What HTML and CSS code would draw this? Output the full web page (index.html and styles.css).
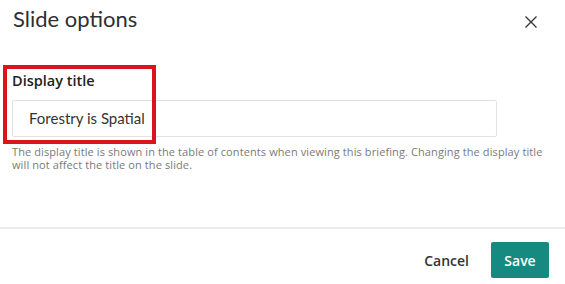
FILE: index.html
```html
<!DOCTYPE html>
<html>
<head>
<meta charset="utf-8">
<link rel="stylesheet" href="styles.css">
</head>
<body>
<div class="dialog">
  <div class="header">
    <h1 class="title">Slide options</h1>
    <button class="close" aria-label="Close">
      <svg width="12" height="12" viewBox="0 0 12 12"><path d="M0.5 0.5L11.5 11.5M11.5 0.5L0.5 11.5" stroke="#333" stroke-width="1.3" fill="none"/></svg>
    </button>
  </div>
  <div class="body">
    <div class="field">
      <label class="label">Display title</label>
      <div class="input">Forestry is Spatial</div>
      <div class="annotation"></div>
    </div>
    <p class="help">The display title is shown in the table of contents when viewing this briefing. Changing the display title will not affect the title on the slide.</p>
  </div>
  <div class="divider"></div>
  <div class="footer">
    <button class="cancel">Cancel</button>
    <button class="save">Save</button>
  </div>
</div>
</body>
</html>
```
FILE: styles.css
```css
html, body {
  margin: 0;
  padding: 0;
  background: #fff;
}
.dialog {
  width: 565px;
  height: 284px;
  font-family: Lato, "Open Sans", sans-serif;
  color: #2b2b2b;
  display: flex;
  flex-direction: column;
}
.header {
  display: flex;
  justify-content: space-between;
  align-items: flex-start;
  padding: 4px 28px 0 12px;
  height: 58px;
  box-sizing: border-box;
}
.title {
  margin: 0 0 0 1px;
  font-size: 22px;
  font-weight: 400;
  line-height: 30px;
  color: #2f2f2f;
}
.close {
  border: 0;
  background: none;
  padding: 0;
  margin-top: 12px;
  width: 12px;
  height: 12px;
  display: flex;
}
.body {
  padding: 0 12px;
  height: 169px;
}
.field {
  position: relative;
  display: flex;
  flex-direction: column;
}
.label {
  font-family: "Open Sans", sans-serif;
  font-size: 14.5px;
  font-weight: 600;
  line-height: 20px;
  margin-top: 13px;
  color: #222;
}
.input {
  margin-top: 9px;
  width: 485px;
  height: 37px;
  box-sizing: border-box;
  border: 1px solid #e2e2e2;
  border-radius: 2px;
  padding-left: 16px;
  font-size: 15px;
  line-height: 35px;
  color: #333;
}
.annotation {
  position: absolute;
  left: -9px;
  top: 7px;
  width: 153px;
  height: 79px;
  box-sizing: border-box;
  border: 4px solid #d8141e;
}
.help {
  margin: 8px 0 0;
  font-family: "Open Sans", sans-serif;
  font-size: 11px;
  letter-spacing: 0.1px;
  line-height: 13px;
  color: #7a7a7a;
  width: 535px;
}
.divider {
  height: 2px;
  background: #ebebeb;
}
.footer {
  display: flex;
  justify-content: flex-end;
  align-items: center;
  gap: 22px;
  padding: 13px 16px 0 0;
}
.cancel {
  border: 0;
  background: none;
  padding: 0;
  font-family: "Open Sans", sans-serif;
  font-size: 14px;
  font-weight: 600;
  color: #333;
}
.save {
  border: 0;
  border-radius: 2px;
  background: #168a80;
  color: #fff;
  width: 58px;
  height: 36px;
  font-family: "Open Sans", sans-serif;
  font-size: 14px;
  font-weight: 600;
}
```
